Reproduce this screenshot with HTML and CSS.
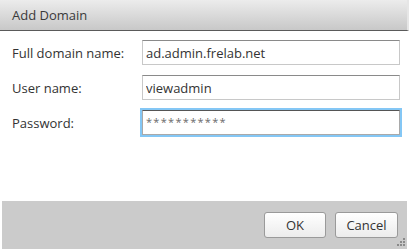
FILE: index.html
```html
<!DOCTYPE html>
<html>
<head>
<meta charset="utf-8">
<link rel="stylesheet" href="styles.css">
</head>
<body>
<div class="dialog">
  <div class="titlebar">Add Domain</div>
  <div class="content">
    <div class="form">
      <label class="label" for="f1">Full domain name:</label>
      <input class="field" id="f1" type="text" value="ad.admin.frelab.net">
      <label class="label" for="f2">User name:</label>
      <input class="field" id="f2" type="text" value="viewadmin">
      <label class="label" for="f3">Password:</label>
      <input class="field field-focus field-pass" id="f3" type="text" value="***********">
    </div>
  </div>
  <div class="footer">
    <button class="btn btn-ok">OK</button>
    <button class="btn">Cancel</button>
    <svg class="grip" width="9" height="9" viewBox="0 0 9 9">
      <rect x="6" y="0" width="2" height="2" fill="#8a8a8a"/>
      <rect x="3" y="3" width="2" height="2" fill="#8a8a8a"/>
      <rect x="6" y="3" width="2" height="2" fill="#8a8a8a"/>
      <rect x="0" y="6" width="2" height="2" fill="#8a8a8a"/>
      <rect x="3" y="6" width="2" height="2" fill="#8a8a8a"/>
      <rect x="6" y="6" width="2" height="2" fill="#8a8a8a"/>
    </svg>
  </div>
</div>
</body>
</html>
```
FILE: styles.css
```css
html, body {
  margin: 0;
  padding: 0;
  background: #ffffff;
}
body {
  font-family: "Open Sans", "Noto Sans", sans-serif;
  font-size: 13px;
  color: #333333;
}
.dialog {
  width: 409px;
  height: 250px;
  display: flex;
  flex-direction: column;
  background: #ffffff;
}
.titlebar {
  height: 31px;
  box-sizing: border-box;
  padding-left: 12px;
  line-height: 31px;
  font-size: 13px;
  color: #3a3a3a;
  background: linear-gradient(#ececec, #c8c8c8);
  border-bottom: 1px solid #5a5a5a;
  border-right: 2px solid #e6e6e6;
  flex: none;
}
.content {
  flex: 1;
  padding: 9px 0 0 12px;
}
.form {
  display: grid;
  grid-template-columns: 130px 258px;
  grid-auto-rows: 25px;
  row-gap: 10px;
  align-items: center;
}
.label {
  color: #333333;
}
.field {
  box-sizing: border-box;
  width: 258px;
  height: 25px;
  margin: 0;
  padding: 0 3px;
  font-family: "Open Sans", "Noto Sans", sans-serif;
  font-size: 13px;
  color: #333333;
  background: #ffffff;
  border: 1px solid #c8c8c8;
  border-top-color: #8a8a8a;
  outline: none;
}
.field-focus {
  border-color: #a9a9a9;
  border-top-color: #555555;
  box-shadow: 0 0 0 2px #84c7f5;
}
.field-pass {
  color: #6a6a6a;
  font-size: 11px;
  letter-spacing: 1.3px;
  padding-bottom: 2px;
}
.footer {
  flex: none;
  height: 48px;
  margin: 0 2px 1px 2px;
  background: #cbcbcb;
  display: flex;
  align-items: center;
  justify-content: flex-end;
  gap: 9px;
  padding-right: 9px;
  position: relative;
}
.btn {
  box-sizing: border-box;
  width: 63px;
  height: 26px;
  padding: 0;
  font-family: "Open Sans", "Noto Sans", sans-serif;
  font-size: 13px;
  color: #333333;
  background: linear-gradient(#ffffff, #ececec);
  border: 1px solid #9a9a9a;
  border-radius: 3px;
}
.btn-ok {
  width: 62px;
}
.grip {
  position: absolute;
  right: 1px;
  bottom: 2px;
}
```
